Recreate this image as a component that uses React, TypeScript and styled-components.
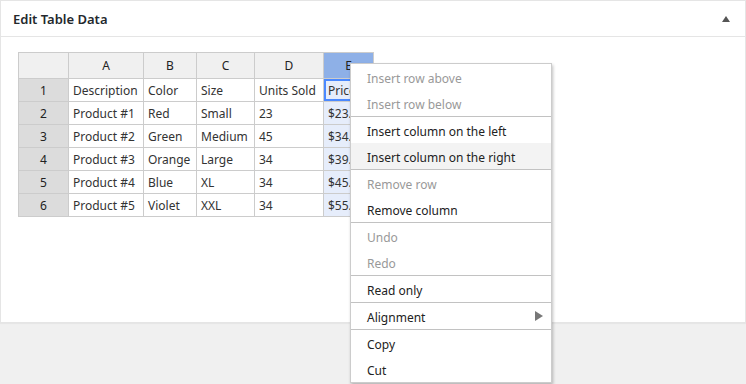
import styled, { createGlobalStyle } from "styled-components";

const GlobalStyle = createGlobalStyle`
  html, body {
    margin: 0;
    padding: 0;
    background: #f0f0f0;
    font-family: "Segoe UI", "Noto Sans", sans-serif;
    font-size: 12px;
    color: #333;
  }
`;

const Page = styled.div`
  position: relative;
  width: 746px;
  height: 384px;
  overflow: hidden;
`;

const Panel = styled.div`
  width: 744px;
  height: 321px;
  background: #fff;
  border: 1px solid #e5e5e5;
  box-shadow: 0 1px 1px rgba(0, 0, 0, 0.04);
`;

const PanelHeader = styled.div`
  height: 35px;
  display: flex;
  align-items: center;
  justify-content: space-between;
  padding: 0 13px 0 12px;
  border-bottom: 1px solid #e5e5e5;

  h2 {
    margin: 0;
    font-size: 13px;
    font-weight: 600;
    color: #23282d;
  }
`;

const Toggle = styled.span`
  width: 0;
  height: 0;
  border-left: 4px solid transparent;
  border-right: 4px solid transparent;
  border-bottom: 6px solid #555;
  margin-right: 2px;
`;

const PanelBody = styled.div`
  padding: 15px 17px;
`;

const Grid = styled.table`
  border-collapse: collapse;
  table-layout: fixed;
  width: 356px;
  font-size: 12px;
`;

const HeadCell = styled.th<{ $active?: boolean }>`
  height: 25px;
  padding: 0;
  border: 1px solid #ccc;
  background: ${(p) => (p.$active ? "#8eb0e7" : "#f0f0f0")};
  font-weight: 400;
  color: #222;
  text-align: center;
`;

const RowHead = styled.th`
  height: 22px;
  padding: 0;
  border: 1px solid #ccc;
  background: #dcdcdc;
  font-weight: 400;
  color: #222;
  text-align: center;
`;

const Cell = styled.td<{ $selected?: boolean; $focus?: boolean }>`
  height: 22px;
  padding: 0 4px;
  border: 1px solid #ccc;
  white-space: nowrap;
  overflow: hidden;
  color: #333;
  background: ${(p) => (p.$selected ? "#e6edfb" : "#fff")};
  ${(p) => p.$selected && "border-left-color: #4b89ff;"}
  ${(p) => p.$focus && "box-shadow: inset 0 0 0 2px #4b89ff;"}
`;

const Menu = styled.div`
  position: absolute;
  left: 350px;
  top: 63px;
  width: 200px;
  background: #fff;
  border: 1px solid #ccc;
  box-shadow: 1px 2px 3px rgba(0, 0, 0, 0.25);
  font-size: 12px;
`;

const MenuItem = styled.div<{ $disabled?: boolean; $hover?: boolean }>`
  box-sizing: border-box;
  height: 26px;
  display: flex;
  align-items: center;
  justify-content: space-between;
  padding: 2px 8px 0 16px;
  color: ${(p) => (p.$disabled ? "#999" : "#222")};
  background: ${(p) => (p.$hover ? "#f3f3f3" : "#fff")};
`;

const Separator = styled.div`
  height: 1px;
  background: #c2c2c2;
`;

const SubArrow = styled.span`
  width: 0;
  height: 0;
  margin-top: -2px;
  border-top: 5px solid transparent;
  border-bottom: 5px solid transparent;
  border-left: 8px solid #777;
`;

const columns = ["A", "B", "C", "D", "E"];
const widths = [50, 75, 53, 58, 69, 50];

const rows = [
  ["Description", "Color", "Size", "Units Sold", "Price"],
  ["Product #1", "Red", "Small", "23", "$23.00"],
  ["Product #2", "Green", "Medium", "45", "$34.00"],
  ["Product #3", "Orange", "Large", "34", "$39.00"],
  ["Product #4", "Blue", "XL", "34", "$45.00"],
  ["Product #5", "Violet", "XXL", "34", "$55.00"],
];

type Entry = { label?: string; disabled?: boolean; hover?: boolean; sub?: boolean; sep?: boolean };

const menu: Entry[] = [
  { label: "Insert row above", disabled: true },
  { label: "Insert row below", disabled: true },
  { sep: true },
  { label: "Insert column on the left" },
  { label: "Insert column on the right", hover: true },
  { sep: true },
  { label: "Remove row", disabled: true },
  { label: "Remove column" },
  { sep: true },
  { label: "Undo", disabled: true },
  { label: "Redo", disabled: true },
  { sep: true },
  { label: "Read only" },
  { sep: true },
  { label: "Alignment", sub: true },
  { sep: true },
  { label: "Copy" },
  { label: "Cut" },
];

export default function App() {
  return (
    <Page>
      <GlobalStyle />
      <Panel>
        <PanelHeader>
          <h2>Edit Table Data</h2>
          <Toggle />
        </PanelHeader>
        <PanelBody>
          <Grid>
            <colgroup>
              {widths.map((w, i) => (
                <col key={i} style={{ width: w }} />
              ))}
            </colgroup>
            <thead>
              <tr>
                <HeadCell />
                {columns.map((c) => (
                  <HeadCell key={c} $active={c === "E"}>
                    {c}
                  </HeadCell>
                ))}
              </tr>
            </thead>
            <tbody>
              {rows.map((r, i) => (
                <tr key={i}>
                  <RowHead>{i + 1}</RowHead>
                  {r.map((v, j) => (
                    <Cell key={j} $selected={j === 4} $focus={j === 4 && i === 0}>
                      {v}
                    </Cell>
                  ))}
                </tr>
              ))}
            </tbody>
          </Grid>
        </PanelBody>
      </Panel>
      <Menu>
        {menu.map((m, i) =>
          m.sep ? (
            <Separator key={i} />
          ) : (
            <MenuItem key={i} $disabled={m.disabled} $hover={m.hover}>
              {m.label}
              {m.sub && <SubArrow />}
            </MenuItem>
          )
        )}
      </Menu>
    </Page>
  );
}
